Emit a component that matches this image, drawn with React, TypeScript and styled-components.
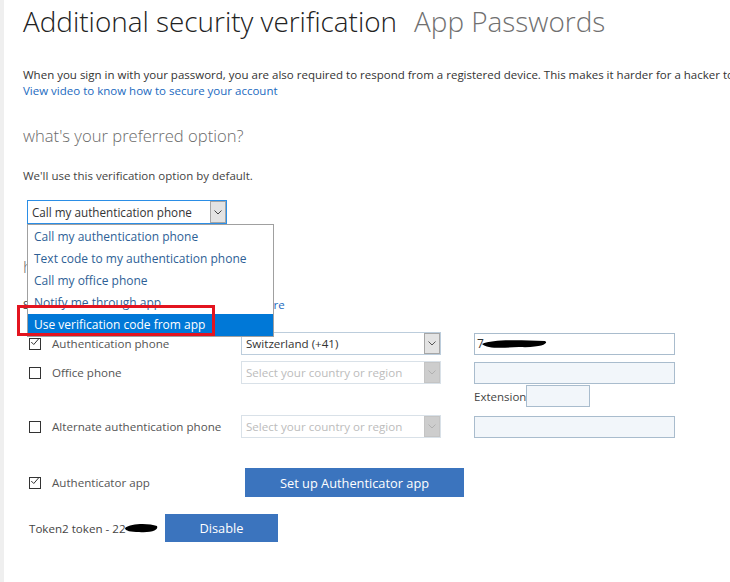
import React from 'react'
import styled, { createGlobalStyle } from 'styled-components'

const GlobalStyle = createGlobalStyle`
  html, body {
    margin: 0;
    padding: 0;
    background: #fff;
    overflow: hidden;
  }
  body {
    font-family: 'Open Sans', 'Noto Sans', sans-serif;
    color: #333;
  }
`

const Page = styled.div`
  width: 730px;
  height: 582px;
  box-sizing: border-box;
  border-left: 4px solid #efefef;
  padding-left: 19px;
  overflow: hidden;
`

const TitleRow = styled.h1`
  margin: 0;
  padding-top: 2px;
  font-weight: 300;
  font-size: 27.9px;
  line-height: 38px;
  white-space: nowrap;
  color: #222;
`

const TitleTab = styled.span`
  color: #707070;
  margin-left: 17px;
`

const Intro = styled.div`
  margin-top: 27px;
  font-size: 11.5px;
  line-height: 16px;
  color: #333;
  white-space: nowrap;
`

const Link = styled.a`
  color: #1b6ac0;
  text-decoration: none;
`

const SectionTitle = styled.h2`
  margin: 25px 0 0;
  font-weight: 300;
  font-size: 16.6px;
  line-height: 24px;
  color: #6a6a6a;
`

const Note = styled.p`
  margin: 20px 0 0;
  font-size: 11.5px;
  line-height: 16px;
  color: #444;
`

const PickerWrap = styled.div`
  position: relative;
  margin: 16px 0 0 4px;
  width: 200px;
`

const Picker = styled.div`
  box-sizing: border-box;
  height: 24px;
  border: 1px solid #2b8ee6;
  display: flex;
  align-items: stretch;
  background: #fff;
`

const PickerValue = styled.div`
  flex: 1;
  padding-left: 4px;
  font-size: 11.7px;
  line-height: 22px;
  color: #333;
  white-space: nowrap;
`

const Arrow = styled.div<{ $disabled?: boolean }>`
  width: 16px;
  box-sizing: border-box;
  border: 1px solid ${p => (p.$disabled ? '#c4c4c4' : '#a6a6a6')};
  background: ${p => (p.$disabled ? '#cdcdcd' : '#e3e3e3')};
  display: flex;
  align-items: center;
  justify-content: center;
`

const Menu = styled.ul`
  position: absolute;
  top: 24px;
  left: 0;
  z-index: 2;
  width: 247px;
  box-sizing: border-box;
  margin: 0;
  padding: 1px 0 0;
  list-style: none;
  background: #fff;
  border: 1px solid #a0a0a0;
`

const MenuItem = styled.li<{ $active?: boolean }>`
  height: 22px;
  padding-left: 6px;
  font-size: 12px;
  line-height: 22px;
  white-space: nowrap;
  color: ${p => (p.$active ? '#fff' : '#2e5f96')};
  background: ${p => (p.$active ? '#0078d7' : 'transparent')};
`

const Highlight = styled.div`
  position: absolute;
  left: -10px;
  top: 105px;
  width: 198px;
  height: 31px;
  box-sizing: border-box;
  border: 3px solid #e3141f;
  z-index: 3;
`

const HiddenTitle = styled(SectionTitle)`
  margin-top: 31px;
`

const HiddenLine = styled.p`
  margin: 18px 0 0;
  font-size: 11.5px;
  line-height: 16px;
  color: #444;
  white-space: nowrap;
`

const Methods = styled.div`
  margin: 19px 0 0 6px;
  display: grid;
  grid-template-columns: 212px 233px 201px;
`

const MethodRow = styled.div`
  display: contents;
`

const Cell = styled.div<{ $top?: number }>`
  display: flex;
  align-items: center;
  height: 23px;
  margin-top: ${p => p.$top ?? 0}px;
`

const Check = styled.span`
  width: 12px;
  height: 12px;
  box-sizing: border-box;
  border: 1px solid #333;
  display: inline-flex;
  align-items: center;
  justify-content: center;
  flex: none;
`

const Label = styled.span`
  margin-left: 11px;
  font-size: 11.6px;
  color: #555;
  white-space: nowrap;
`

const Country = styled.div<{ $disabled?: boolean }>`
  width: 200px;
  height: 23px;
  box-sizing: border-box;
  border: 1px solid ${p => (p.$disabled ? '#d9e1e8' : '#bccddc')};
  display: flex;
  background: #fff;
`

const CountryText = styled.div<{ $disabled?: boolean }>`
  flex: 1;
  padding-left: 4px;
  font-size: 11.6px;
  line-height: 21px;
  white-space: nowrap;
  color: ${p => (p.$disabled ? '#bcbcbc' : '#333')};
`

const Phone = styled.div<{ $disabled?: boolean; $w?: number }>`
  position: relative;
  width: ${p => p.$w ?? 201}px;
  height: 22px;
  box-sizing: border-box;
  border: 1px solid #a9bccd;
  background: ${p => (p.$disabled ? '#f2f6fa' : '#fff')};
  font-size: 12px;
  line-height: 20px;
  padding-left: 2px;
  color: #333;
`

const Scribble = styled.svg`
  position: absolute;
  pointer-events: none;
`

const ExtRow = styled.div`
  grid-column: 3;
  display: flex;
  align-items: center;
  margin-top: 1px;
  font-size: 11.5px;
  color: #444;
`

const ExtLabel = styled.span`
  margin-right: 0;
`

const Spacer = styled.div`
  grid-column: 1 / 3;
`

const AppRows = styled.div`
  margin: 30px 0 0 6px;
`

const AppRow = styled.div<{ $top?: number }>`
  display: flex;
  align-items: center;
  margin-top: ${p => p.$top ?? 0}px;
`

const Button = styled.button<{ $w: number; $h: number }>`
  width: ${p => p.$w}px;
  height: ${p => p.$h}px;
  border: none;
  background: #3b74be;
  color: #fff;
  font-family: inherit;
  font-size: 12.8px;
  padding: 0;
`

const TokenText = styled.span`
  position: relative;
  font-size: 11.6px;
  color: #444;
  white-space: nowrap;
  width: 136px;
`

const Chevron = ({ color }: { color: string }) => (
  <svg width="8" height="5" viewBox="0 0 8 5">
    <path d="M0.5 0.5 L4 4 L7.5 0.5" fill="none" stroke={color} strokeWidth="1" />
  </svg>
)

const Tick = () => (
  <svg width="12" height="10" viewBox="0 0 12 10" style={{ marginTop: -3 }}>
    <path d="M1.5 5 L4.5 8 L11 0.5" fill="none" stroke="#333" strokeWidth="1.2" />
  </svg>
)

const options = [
  'Call my authentication phone',
  'Text code to my authentication phone',
  'Call my office phone',
  'Notify me through app',
  'Use verification code from app',
]

const App: React.FC = () => {
  return (
    <>
      <GlobalStyle />
      <Page>
        <TitleRow>
          Additional security verification<TitleTab>App Passwords</TitleTab>
        </TitleRow>
        <Intro>
          When you sign in with your password, you are also required to respond from a registered device. This makes it harder for a hacker to sign in with just a stolen password.
          <br />
          <Link href="#">View video to know how to secure your account</Link>
        </Intro>

        <SectionTitle>what's your preferred option?</SectionTitle>
        <Note>We'll use this verification option by default.</Note>

        <PickerWrap>
          <Picker>
            <PickerValue>Call my authentication phone</PickerValue>
            <Arrow>
              <Chevron color="#444" />
            </Arrow>
          </Picker>
          <Menu>
            {options.map((o, i) => (
              <MenuItem key={o} $active={i === options.length - 1}>
                {o}
              </MenuItem>
            ))}
          </Menu>
          <Highlight />
        </PickerWrap>

        <HiddenTitle>how would you like to respond?</HiddenTitle>
        <HiddenLine>
          Set up one or more of these options. <Link href="#">Learn more</Link>
        </HiddenLine>

        <Methods>
          <MethodRow>
            <Cell>
              <Check>
                <Tick />
              </Check>
              <Label>Authentication phone</Label>
            </Cell>
            <Cell>
              <Country>
                <CountryText>Switzerland (+41)</CountryText>
                <Arrow>
                  <Chevron color="#555" />
                </Arrow>
              </Country>
            </Cell>
            <Cell>
              <Phone>
                7
                <Scribble width="70" height="14" style={{ left: 4, top: 3 }}>
                  <path d="M3 7 C 14 2, 40 3, 66 4 C 70 6, 64 11, 40 10 C 24 11, 8 12, 3 7 Z" fill="#000" />
                </Scribble>
              </Phone>
            </Cell>
          </MethodRow>

          <MethodRow>
            <Cell $top={6}>
              <Check />
              <Label>Office phone</Label>
            </Cell>
            <Cell $top={6}>
              <Country $disabled>
                <CountryText $disabled>Select your country or region</CountryText>
                <Arrow $disabled>
                  <Chevron color="#b0b0b0" />
                </Arrow>
              </Country>
            </Cell>
            <Cell $top={6}>
              <Phone $disabled />
            </Cell>
          </MethodRow>

          <Spacer />
          <ExtRow>
            <ExtLabel>Extension</ExtLabel>
            <Phone $disabled $w={64} />
          </ExtRow>

          <MethodRow>
            <Cell $top={8}>
              <Check />
              <Label>Alternate authentication phone</Label>
            </Cell>
            <Cell $top={8}>
              <Country $disabled>
                <CountryText $disabled>Select your country or region</CountryText>
                <Arrow $disabled>
                  <Chevron color="#b0b0b0" />
                </Arrow>
              </Country>
            </Cell>
            <Cell $top={8}>
              <Phone $disabled />
            </Cell>
          </MethodRow>
        </Methods>

        <AppRows>
          <AppRow>
            <Cell style={{ width: 216 }}>
              <Check>
                <Tick />
              </Check>
              <Label>Authenticator app</Label>
            </Cell>
            <Button $w={219} $h={29}>Set up Authenticator app</Button>
          </AppRow>
          <AppRow $top={17}>
            <TokenText>
              Token2 token - 22
              <Scribble width="36" height="12" style={{ left: 94, top: 1 }}>
                <path d="M2 6 C 8 1, 26 1, 34 4 C 36 8, 28 11, 16 10 C 8 10, 2 9, 2 6 Z" fill="#000" />
              </Scribble>
            </TokenText>
            <Button $w={113} $h={28}>Disable</Button>
          </AppRow>
        </AppRows>
      </Page>
    </>
  )
}

export default App
